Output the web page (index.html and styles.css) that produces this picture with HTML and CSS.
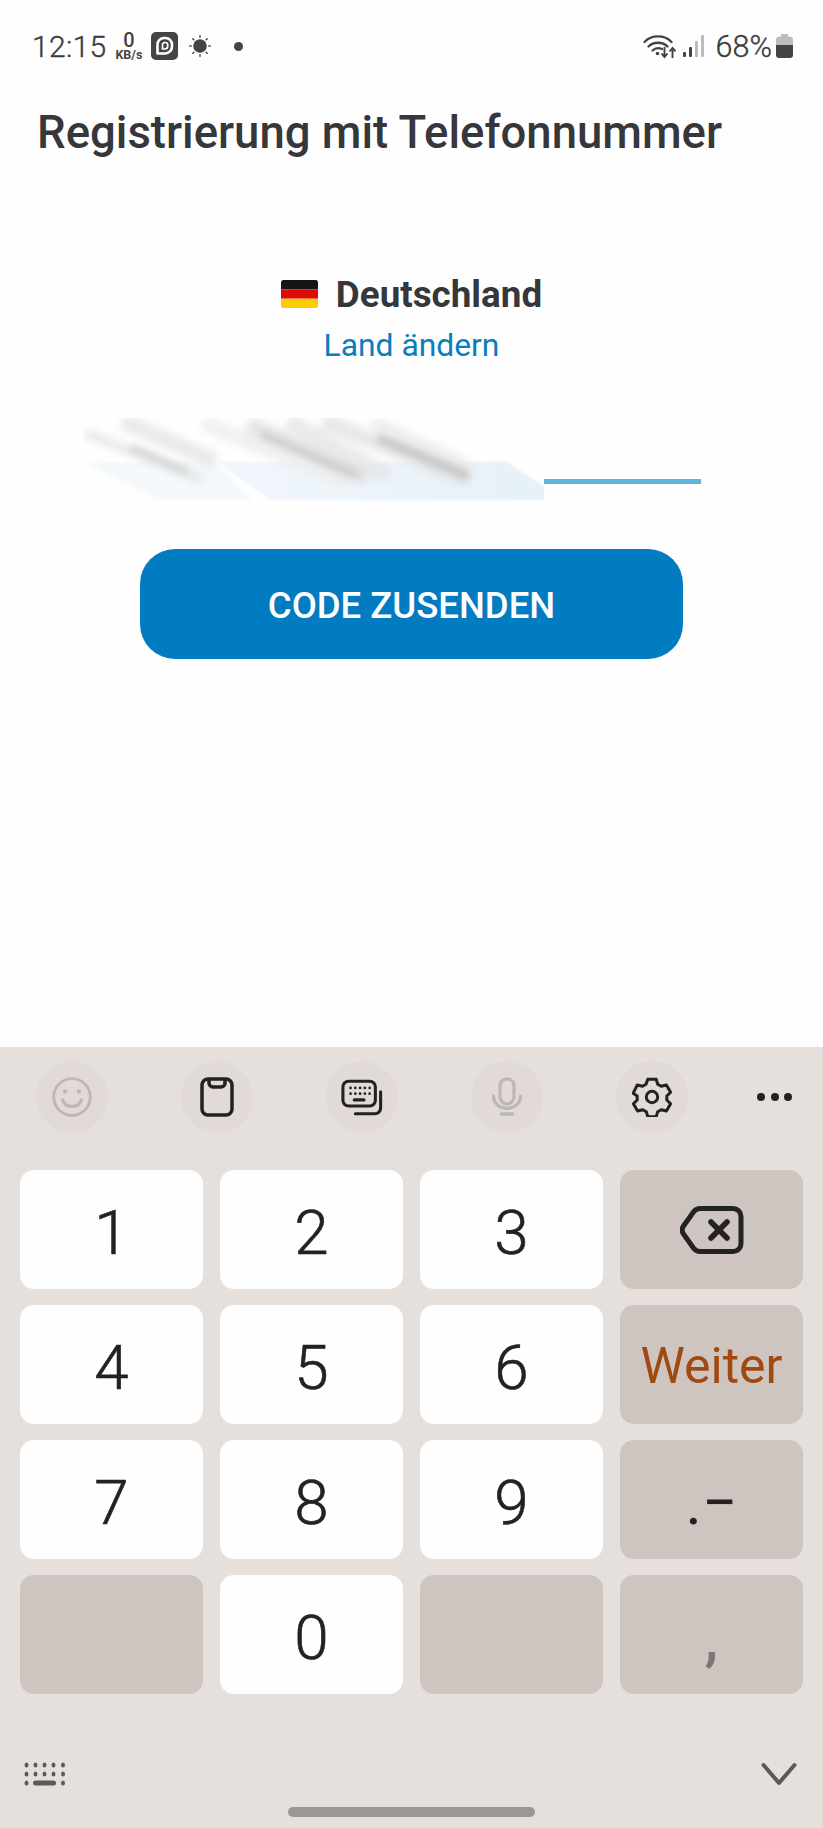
FILE: index.html
```html
<!DOCTYPE html>
<html lang="de">
<head>
<meta charset="utf-8">
<title>Registrierung mit Telefonnummer</title>
<link rel="stylesheet" href="styles.css">
</head>
<body>
<div class="phone">
  <header class="status">
    <div class="status-left">
      <span class="clock">12:15</span>
      <span class="kbs"><b>0</b><small>KB/s</small></span>
      <svg class="ic-app" viewBox="0 0 27 28"><rect width="27" height="28" rx="5" fill="#444"/><path d="M6.500 21.500V12.500a6.500 6.500 0 0 1 6.500-6.500h1.500a6.500 6.500 0 0 1 6.500 6.500v2a7 7 0 0 1-7 7z" fill="none" stroke="#fff" stroke-width="2.600" stroke-linejoin="round"/><path d="M11.500 17v-4.200a2.300 2.300 0 0 1 2.300-2.300h.6a2.300 2.300 0 0 1 2.300 2.300v1.200a3 3 0 0 1-3 3z" fill="none" stroke="#fff" stroke-width="1.700" stroke-linejoin="round"/></svg>
      <svg class="ic-sun" viewBox="0 0 22 22"><circle cx="11" cy="11" r="6.800" fill="#444"/><g stroke="#444" stroke-width="1.500" stroke-linecap="round"><path d="M11 .8v1.400M11 19.800v1.400M.8 11h1.400M19.800 11h1.400M3.800 3.800l1 1M17.200 17.200l1 1M3.800 18.200l1-1M17.200 4.800l1-1"/></g></svg>
      <span class="dot"></span>
    </div>
    <div class="status-right">
      <svg class="ic-wifi" viewBox="0 0 33 25"><g fill="none" stroke="#444" stroke-width="2.300" stroke-linecap="round"><path d="M1.500 8C8.500 .5 21.500 .5 28.500 8"/><path d="M5.500 12.500c5-5 14-5 19 0"/><path d="M9.500 16.500c2.500-2.300 6.500-2.800 9.500-1.500"/></g><circle cx="14.500" cy="19.500" r="1.800" fill="#444"/><path d="M21.500 13v10m-3-3.500l3 3.500 3-3.500M29.500 24V14m-3 3.500l3-3.500 3 3.500" fill="none" stroke="#444" stroke-width="1.900"/></svg>
      <svg class="ic-signal" viewBox="0 0 21 22"><rect x="0" y="17" width="3" height="5" rx="1" fill="#444"/><rect x="6" y="12" width="3" height="10" rx="1" fill="#444"/><rect x="12" y="6" width="3" height="16" rx="1" fill="#bbb"/><rect x="18" y="0" width="3" height="22" rx="1" fill="#bbb"/></svg>
      <span class="pct">68%</span>
      <svg class="ic-batt" viewBox="0 0 17 24"><path d="M5 0h7v2.500h1.500a3.500 3.500 0 0 1 3.500 3.500v5H0V6a3.500 3.500 0 0 1 3.500-3.500H5z" fill="#bdbdbd"/><path d="M0 11h17v10a3 3 0 0 1-3 3H3a3 3 0 0 1-3-3z" fill="#444"/></svg>
    </div>
  </header>

  <main class="content">
    <h1 class="title">Registrierung mit Telefonnummer</h1>
    <div class="country">
      <svg class="flag" viewBox="0 0 37 28"><defs><clipPath id="fl"><rect width="37" height="28" rx="2.500"/></clipPath></defs><g clip-path="url(#fl)"><rect width="37" height="9.300" fill="#151515"/><rect y="9.300" width="37" height="9.400" fill="#dd0a05"/><rect y="18.700" width="37" height="9.300" fill="#fdcb02"/></g></svg>
      <span class="country-name">Deutschland</span>
    </div>
    <a class="change">Land ändern</a>
    <div class="field">
      <svg class="smear" viewBox="0 0 461 84" aria-hidden="true">
        <defs>
          <filter id="b1" x="-20%" y="-60%" width="140%" height="220%"><feGaussianBlur stdDeviation="4"/></filter>
          <filter id="b3" x="-20%" y="-60%" width="140%" height="220%"><feGaussianBlur stdDeviation="3.500"/></filter>
          <filter id="b2" x="-5%" y="-10%" width="110%" height="120%"><feGaussianBlur stdDeviation="1.200"/></filter>
          <linearGradient id="fg" x1="0" x2="1" y1="0" y2="0"><stop offset="0" stop-color="#f1f6fb"/><stop offset="1" stop-color="#e6f1f8"/></linearGradient>
        </defs>
        <polygon filter="url(#b2)" points="0,44 132,44 170,82 77,82" fill="#f5f9fc"/>
        <path filter="url(#b2)" d="M135 44H424L470 74V82H187Z" fill="url(#fg)"/>
        <g filter="url(#b1)" fill="none" opacity=".8">
          <path d="M2 15L120 62" stroke="#dfdfdf" stroke-width="8"/>
          <path d="M40 3L133 44" stroke="#e4e4e4" stroke-width="16"/>
          <path d="M120 5L262 64" stroke="#ececec" stroke-width="14"/>
          <path d="M165 6L285 60" stroke="#dedede" stroke-width="16"/>
          <path d="M205 3L305 58" stroke="#e4e4e4" stroke-width="16"/>
          <path d="M240 3L387 62" stroke="#e2e2e2" stroke-width="16"/>
          <path d="M290 4L385 48" stroke="#e8e8e8" stroke-width="12"/>
        </g>
        <g filter="url(#b3)" fill="none" opacity=".75">
          <path d="M47 29L105 54" stroke="#cdcdcd" stroke-width="7"/>
          <path d="M178 16L275 58" stroke="#c4c4c4" stroke-width="7"/>
          <path d="M295 20L385 58" stroke="#bcbcbc" stroke-width="9"/>
        </g>
      </svg>
      <div class="line"></div>
    </div>
    <button class="send">CODE ZUSENDEN</button>
  </main>

  <section class="keyboard">
    <div class="toolbar">
      <span class="tool"><svg viewBox="0 0 40 40"><g fill="none" stroke="#bdb8b4" stroke-width="2.800"><circle cx="20" cy="20" r="18.300"/><path d="M10.500 23c3 8.500 16 8.500 19 0" stroke-linecap="round" stroke-width="3.200"/></g><circle cx="13" cy="14.500" r="2.200" fill="#bdb8b4"/><circle cx="27" cy="14.500" r="2.200" fill="#bdb8b4"/></svg></span>
      <span class="tool"><svg viewBox="0 0 40 40"><g fill="none" stroke="#222" stroke-width="3.500" stroke-linejoin="round"><rect x="5" y="2" width="30" height="36" rx="6"/><path d="M12 2v4a4 4 0 0 0 4 4h8a4 4 0 0 0 4-4V2"/></g></svg></span>
      <span class="tool"><svg class="wide" viewBox="0 0 44 38"><g fill="none" stroke="#222" stroke-width="3.200" stroke-linecap="round"><rect x="2" y="2" width="34" height="26" rx="6"/><path d="M41.500 13v17a6 6 0 0 1-6 6H15"/><path d="M14 21.500h10" stroke-width="3.500"/></g><g fill="#222"><circle cx="10" cy="9" r="1.400"/><circle cx="15" cy="9" r="1.400"/><circle cx="20" cy="9" r="1.400"/><circle cx="25" cy="9" r="1.400"/><circle cx="30" cy="9" r="1.400"/><circle cx="10" cy="15" r="1.400"/><circle cx="15" cy="15" r="1.400"/><circle cx="20" cy="15" r="1.400"/><circle cx="25" cy="15" r="1.400"/><circle cx="30" cy="15" r="1.400"/></g></svg></span>
      <span class="tool"><svg viewBox="0 0 40 40"><g fill="none" stroke="#bdb8b4" stroke-width="3.200" stroke-linecap="round"><rect x="13" y="1.800" width="14" height="25" rx="7"/><path d="M6.500 19c0 16.500 27 16.500 27 0"/><path d="M14.500 37h11" stroke-width="3.600"/></g></svg></span>
      <span class="tool"><svg viewBox="0 0 40 40"><g fill="none" stroke="#222" stroke-width="3" stroke-linejoin="round"><path d="M15.800 2.200h8.400l1.500 5.100 3.500 2 5.200-1.300 4.200 7.300-3.800 3.700v4l3.800 3.700-4.200 7.300-5.200-1.300-3.500 2-1.500 5.100h-8.400l-1.500-5.100-3.500-2-5.200 1.300-4.200-7.300 3.800-3.700v-4L1.100 16.300 5.300 8l5.200 1.300 3.500-2z"/><circle cx="20" cy="20" r="5.700"/></g></svg></span>
      <span class="tool-plain"><i></i><i></i><i></i></span>
    </div>
    <div class="keys">
      <button class="key">1</button>
      <button class="key">2</button>
      <button class="key">3</button>
      <button class="key fn"><svg class="del" viewBox="0 0 64 48"><g fill="none" stroke="#222" stroke-width="5" stroke-linecap="round" stroke-linejoin="round"><path d="M20 2.500h33a8 8 0 0 1 8 8v27a8 8 0 0 1-8 8H20a8 8 0 0 1-6-2.800L3.500 28a7 7 0 0 1 0-8L14 5.300a8 8 0 0 1 6-2.800z"/><path d="M31 16l16 16M47 16L31 32" stroke-width="5.600"/></g></svg></button>
      <button class="key">4</button>
      <button class="key">5</button>
      <button class="key">6</button>
      <button class="key fn next">Weiter</button>
      <button class="key">7</button>
      <button class="key">8</button>
      <button class="key">9</button>
      <button class="key fn sym">.−</button>
      <button class="key fn"></button>
      <button class="key">0</button>
      <button class="key fn"></button>
      <button class="key fn sym comma">,</button>
    </div>
    <div class="kb-foot">
      <svg class="kb-grid" viewBox="0 0 42 24"><g fill="#5e5a57"><ellipse cx="2.500" cy="3" rx="2" ry="2.500"/><ellipse cx="11.500" cy="3" rx="2" ry="2.500"/><ellipse cx="20.500" cy="3" rx="2" ry="2.500"/><ellipse cx="29.500" cy="3" rx="2" ry="2.500"/><ellipse cx="39" cy="3" rx="2" ry="2.500"/><ellipse cx="2.500" cy="12" rx="2" ry="2.500"/><ellipse cx="11.500" cy="12" rx="2" ry="2.500"/><ellipse cx="20.500" cy="12" rx="2" ry="2.500"/><ellipse cx="29.500" cy="12" rx="2" ry="2.500"/><ellipse cx="39" cy="12" rx="2" ry="2.500"/><ellipse cx="2.500" cy="21" rx="2" ry="2.500"/><rect x="9" y="18.500" width="23" height="5" rx="2.500"/><ellipse cx="39" cy="21" rx="2" ry="2.500"/></g></svg>
      <svg class="kb-hide" viewBox="0 0 36 24"><path d="M2.500 3L18 21 33.500 3" fill="none" stroke="#5e5a57" stroke-width="4" stroke-linecap="round" stroke-linejoin="round"/></svg>
    </div>
    <div class="home-wrap"><div class="home"></div></div>
  </section>
</div>
</body>
</html>
```

FILE: styles.css
```css
* { box-sizing: border-box; }
html, body { margin: 0; padding: 0; }
body { background: #fefefe; font-family: Roboto, "Liberation Sans", sans-serif; }
.phone { width: 823px; height: 1828px; display: flex; flex-direction: column; overflow: hidden; background: #fefefe; }

.status { height: 92px; padding: 0 30px 0 32px; display: flex; justify-content: space-between; align-items: center; color: #444; }
.status-left, .status-right { display: flex; align-items: center; }
.clock { font-size: 30px; font-weight: 300; letter-spacing: .3px; color: #3a3a3a; -webkit-text-stroke: .35px #3a3a3a; }
.kbs { width: 27px; margin-left: 9px; display: flex; flex-direction: column; align-items: center; font-weight: 700; line-height: 1; color: #444; }
.kbs b { font-size: 20px; line-height: 17px; font-weight: 500; }
.kbs small { font-size: 12.500px; line-height: 11px; }
.ic-app { width: 27px; height: 28px; margin-left: 9px; }
.ic-sun { width: 22px; height: 22px; margin-left: 11px; }
.dot { width: 9px; height: 9px; border-radius: 50%; background: #444; margin-left: 23px; }
.ic-wifi { width: 33px; height: 25px; }
.ic-signal { width: 21px; height: 22px; margin-left: 7px; }
.pct { font-size: 30.500px; font-weight: 300; margin-left: 12px; color: #3a3a3a; -webkit-text-stroke: .35px #3a3a3a; }
.ic-batt { width: 17px; height: 24px; margin-left: 4px; }

.content { flex: 1; display: flex; flex-direction: column; align-items: center; }
.title { align-self: flex-start; margin: 16px 0 0 37px; font-size: 45.500px; line-height: 50px; font-weight: 500; color: #35373a; white-space: nowrap; }
.country { margin-top: 116px; display: flex; align-items: center; height: 40px; }
.flag { width: 37px; height: 28px; }
.country-name { margin-left: 18px; font-size: 36.800px; font-weight: 700; color: #35373a; }
.change { margin-top: 11px; font-size: 31.800px; line-height: 40px; color: #0a7dbd; }
.field { position: relative; align-self: flex-start; margin: 53px 0 0 83px; width: 618px; height: 84px; }
.smear { position: absolute; left: 0; top: 0; width: 461px; height: 84px; }
.line { position: absolute; left: 461px; right: 0; top: 61px; height: 5px; background: #5cb5da; }
.send { margin-top: 47px; width: 543px; height: 110px; border: 0; border-radius: 35px; background: #017cc1; color: #fefefe; font: 500 36.500px Roboto, sans-serif; padding: 3px 0 0; }

.keyboard { height: 781px; background: #e5e0dc; display: flex; flex-direction: column; }
.toolbar { height: 123px; padding: 14px 0 0 36px; display: flex; }
.tool { width: 72px; height: 72px; margin-right: 73px; border-radius: 50%; background: #e1dad6; display: flex; align-items: center; justify-content: center; flex: none; }
.tool svg { width: 40px; height: 40px; }
.tool svg.wide { width: 42px; height: 37px; }
.tool-plain { height: 72px; margin-left: -4px; display: flex; align-items: center; gap: 5.500px; flex: none; }
.tool-plain i { width: 8px; height: 8px; border-radius: 50%; background: #222; }

.keys { margin: 0 20px; display: grid; grid-template-columns: repeat(4, 183px); grid-auto-rows: 119px; gap: 16px 17px; }
.key { border: 0; border-radius: 14px; background: #fefefe; color: #222; font: 300 62px Roboto, sans-serif; -webkit-text-stroke: .6px #222; display: flex; align-items: center; justify-content: center; padding: 5px 0 0; }
.fn { background: #cfc5c0; }
.key.fn:has(.del) { padding: 0; }
.del { width: 64px; height: 48px; }
.next { color: #a04a12; font-size: 50px; font-weight: 400; padding: 2px 0 0; -webkit-text-stroke: 0; }
.sym { font-weight: 400; -webkit-text-stroke: 0; }
.comma { color: #7d7875; font-weight: 500; }

.kb-foot { margin-top: 68px; padding: 0 26px 0 24px; display: flex; justify-content: space-between; align-items: center; height: 24px; }
.kb-grid { width: 42px; height: 24px; }
.kb-hide { width: 36px; height: 24px; }
.home-wrap { margin-top: 21px; display: flex; justify-content: center; }
.home { width: 247px; height: 10px; border-radius: 5px; background: #9c9793; }
```
